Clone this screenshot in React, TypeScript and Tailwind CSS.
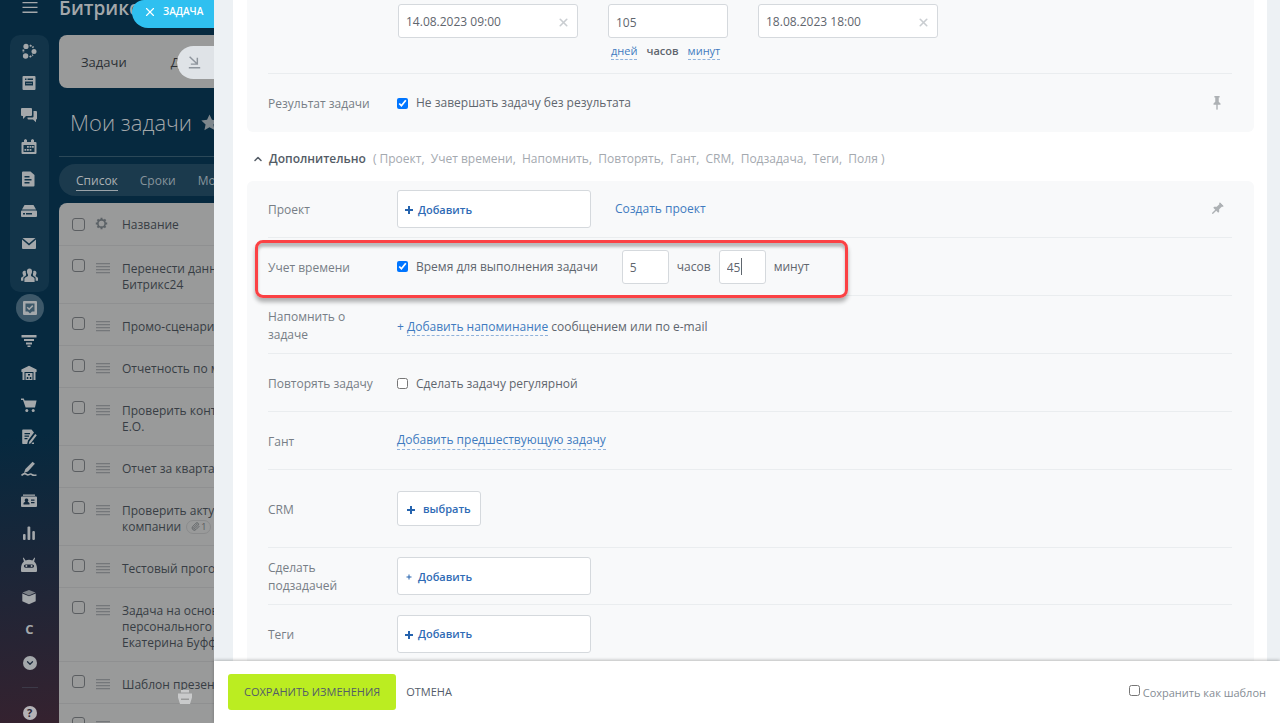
import type { ReactNode } from 'react';
import { ChevronDown, ChevronUp, Paperclip, X } from 'lucide-react';

type IconProps = { children: ReactNode; className?: string };

const Glyph = ({ children, className = 'size-4' }: IconProps) => (
    <svg viewBox="0 0 16 16" fill="currentColor" className={className} aria-hidden="true">
        {children}
    </svg>
);

const groupIcons: { label: string; icon: ReactNode }[] = [
    {
        label: 'CoPilot',
        icon: (
            <Glyph>
                <circle cx="5" cy="3.4" r="2.6" />
                <circle cx="13" cy="8.6" r="2.5" />
                <circle cx="4.6" cy="13" r="2.7" />
                <path d="M8.8 2.2 12.6 4.6M2.4 6.6v3.2M8.6 14 12 12" fill="none" stroke="currentColor" strokeWidth="1.8" strokeDasharray="2 1" />
            </Glyph>
        ),
    },
    {
        label: 'Лента',
        icon: (
            <Glyph>
                <path fillRule="evenodd" d="M2.500 1h11a1 1 0 0 1 1 1v12a1 1 0 0 1-1 1h-11a1 1 0 0 1-1-1V2a1 1 0 0 1 1-1ZM4 3.500V5h1.500V3.500H4Zm2.500 0V5H12V3.500H6.500ZM4 6.500V10.500h8V6.500H4Z" />
                <path d="M5 8h6v1H5z" opacity=".5" />
            </Glyph>
        ),
    },
    {
        label: 'Чаты',
        icon: (
            <Glyph>
                <path d="M1 1h9a1 1 0 0 1 1 1v6a1 1 0 0 1-1 1H5l-3 3V9H1a1 1 0 0 1-1-1V2a1 1 0 0 1 1-1Z" />
                <path d="M12.500 4H15a1 1 0 0 1 1 1v6.500a1 1 0 0 1-1 1v2.800l-3-2.800H7.500a1 1 0 0 1-1-1v-1h5a1 1 0 0 0 1-1V4Z" />
            </Glyph>
        ),
    },
    {
        label: 'Календарь',
        icon: (
            <Glyph>
                <path fillRule="evenodd" d="M1.500 3H3V1l1.500-1L6 1v2h4V1l1.500-1L13 1v2h1.500a1 1 0 0 1 1 1v10a1 1 0 0 1-1 1h-13a1 1 0 0 1-1-1V4a1 1 0 0 1 1-1Zm1 3v7h11V6h-11Z" />
                <path d="M6 7h1.800v1.800H6zM8.600 7h1.800v1.800H8.600zM11 7h1.800v1.800H11zM3.500 10h1.800v1.800H3.500zM6 10h1.800v1.800H6zM8.600 10h1.800v1.800H8.600z" />
            </Glyph>
        ),
    },
    {
        label: 'Документы',
        icon: (
            <Glyph>
                <path fillRule="evenodd" d="M2 .5h7.500L13.500 4v10.500a1 1 0 0 1-1 1H2a1 1 0 0 1-1-1v-13a1 1 0 0 1 1-1ZM3.500 5v1.400h5V5h-5Zm0 3v1.400h7V8h-7Zm0 3v1.400h5V11h-5Z" />
            </Glyph>
        ),
    },
    {
        label: 'Диск',
        icon: (
            <Glyph>
                <path d="M3.500 2h9L15 6.500H1L3.500 2Z" />
                <path fillRule="evenodd" d="M1 7.500h14a1 1 0 0 1 1 1V13a1 1 0 0 1-1 1H1a1 1 0 0 1-1-1V8.500a1 1 0 0 1 1-1ZM2 10v1.500h2V10H2Zm3 0v1.500h6V10H5Z" />
            </Glyph>
        ),
    },
    {
        label: 'Почта',
        icon: (
            <Glyph>
                <path d="M1.500 3h13L8 8.500 1.500 3Z" />
                <path d="M1 4.500 8 10.400l7-5.900V13a1 1 0 0 1-1 1H2a1 1 0 0 1-1-1V4.500Z" />
            </Glyph>
        ),
    },
    {
        label: 'Группы',
        icon: (
            <Glyph className="size-[17px]">
                <path d="M8 1.500c1.600 0 2.400 1.200 2.400 2.800 0 1.300-.5 2.300-1 2.900v1.200l2.600 1.400c.6.3.8.9.8 1.500V14H3.200v-2.700c0-.6.2-1.200.8-1.500l2.600-1.400V7.200c-.5-.6-1-1.600-1-2.900C5.600 2.700 6.400 1.500 8 1.500Z" />
                <path d="M3.200 3.500c-1.200 0-1.800.9-1.800 2.200 0 1 .4 1.700.8 2.200v.9L.6 9.600c-.4.200-.6.600-.6 1.100V13h2.200v-2c0-.9.4-1.600 1.200-2l1.300-.7-.3-.4c.3-.4.4-.9.4-1.500-.4-.8-.5-1.700-.3-2.500-.3-.3-.7-.4-1.300-.4Zm9.600 0c1.200 0 1.800.9 1.800 2.200 0 1-.4 1.700-.8 2.200v.9l1.600.8c.4.200.6.600.6 1.100V13h-2.200v-2c0-.9-.4-1.600-1.200-2l-1.300-.7.3-.4c-.3-.4-.4-.9-.4-1.500.4-.8.5-1.700.3-2.500.3-.3.7-.4 1.300-.4Z" />
            </Glyph>
        ),
    },
];

const tasksIcon = (
    <Glyph>
        <path fillRule="evenodd" d="M2 1h12a1 1 0 0 1 1 1v12a1 1 0 0 1-1 1H2a1 1 0 0 1-1-1V2a1 1 0 0 1 1-1Zm1.500 2.500v8H6l2 2 2-2h2.500v-8h-9Z" />
        <path d="m5.200 7.200 2 2 3.600-3.600" fill="none" stroke="currentColor" strokeWidth="1.500" />
    </Glyph>
);

const menuIcons: { label: string; icon: ReactNode }[] = [
    {
        label: 'CRM',
        icon: (
            <Glyph>
                <path d="M.5 2h15v2.500H.5zM3 6h10v2H3zM5 9.500h6v2H5zM6.500 12.500h3v1.500h-3z" />
            </Glyph>
        ),
    },
    {
        label: 'Склад',
        icon: (
            <Glyph>
                <path fillRule="evenodd" d="M8 .8 15.600 4.400V7H14.500v8h-2V7h-9v8h-2V7H.4V4.400L8 .8Z" />
                <path fillRule="evenodd" d="M4.500 8h7v7h-7V8ZM7 9v1.600h2V9H7Zm-1.200 3v2h1.500v-2H5.800Zm3 0v2h1.500v-2H8.800Z" />
            </Glyph>
        ),
    },
    {
        label: 'Магазин',
        icon: (
            <Glyph>
                <path d="M0 1.500h2.800l.8 2h12L14 10.500H4.600L2 3H0V1.500Z" />
                <circle cx="5.800" cy="13.500" r="1.500" />
                <circle cx="12.200" cy="13.500" r="1.500" />
            </Glyph>
        ),
    },
    {
        label: 'Договоры',
        icon: (
            <Glyph>
                <path fillRule="evenodd" d="M2 .5h8.500l2.500 3-6 8-.8 3.500H2a.8.800 0 0 1-.8-.8V1.300A.8.800 0 0 1 2 .5ZM3.500 4v1.200H9V4H3.500Zm0 2.500v1.200H8V6.500H3.500Zm0 2.500v1.200h3V9h-3Z" />
                <path d="m14.200 5 1.600 1.200-6 8-2 .8.4-2.200 6-7.800ZM11.500 13.500H13V15h-2.500z" />
            </Glyph>
        ),
    },
    {
        label: 'Подпись',
        icon: (
            <Glyph>
                <path d="m11.600.8 2.300 2-7 7.600-4 1.600 1.500-3.900L11.600.8Z" />
                <path d="M.5 14.500c2-2 3.500-2.200 4.500-1.500s1.500 1.500 3 .6 2-.9 3 0 2 .9 4.500.4" fill="none" stroke="currentColor" strokeWidth="1.600" />
            </Glyph>
        ),
    },
    {
        label: 'Контакты',
        icon: (
            <Glyph>
                <path d="M2 1.500h12v1.300H2z" />
                <path fillRule="evenodd" d="M1 3.500h14a1 1 0 0 1 1 1V13a1 1 0 0 1-1 1H1a1 1 0 0 1-1-1V4.500a1 1 0 0 1 1-1Zm4.500 2A1.700 1.700 0 0 0 4.400 8.600L2.500 10v1.500h6V10L6.600 8.600A1.700 1.700 0 0 0 5.500 5.500ZM10 6.500v1.300h3.500V6.500H10Zm0 2.500v1.300h3.500V9H10Z" />
            </Glyph>
        ),
    },
    {
        label: 'Аналитика',
        icon: (
            <Glyph>
                <rect x="2" y="9" width="2.600" height="6" rx="1" />
                <rect x="6.500" y="1.500" width="2.800" height="13.500" rx="1" />
                <rect x="11.300" y="6" width="2.600" height="9" rx="1" />
            </Glyph>
        ),
    },
    {
        label: 'Роботы',
        icon: (
            <Glyph>
                <path fillRule="evenodd" d="M2.500.5 4.600 3.600a8 8 0 0 1 6.800 0L13.500.5l.6.400-1 3.500c1.700 1.200 2.900 3.800 2.900 7.100V14a1 1 0 0 1-1 1H1a1 1 0 0 1-1-1v-2.500c0-3.300 1.200-5.900 2.900-7.100l-1-3.500.6-.4ZM4.500 7.500a1.600 1.600 0 0 0 0 3.200h7a1.600 1.600 0 0 0 0-3.200h-7Z" />
                <circle cx="5.400" cy="9.100" r="1" />
                <circle cx="10.600" cy="9.100" r="1" />
            </Glyph>
        ),
    },
    {
        label: 'Маркет',
        icon: (
            <Glyph>
                <path d="M8 1 14.500 3.600 8 6.400 1.500 3.600 8 1Z" opacity=".7" />
                <path d="M1.300 4.500 8 7.300l6.700-2.800v7.800L8 15.200l-6.700-2.900V4.500Z" />
            </Glyph>
        ),
    },
];

const tasks: { title: string[]; files?: number }[] = [
    { title: ['Перенести данные', 'Битрикс24'] },
    { title: ['Промо-сценарий'] },
    { title: ['Отчетность по маркетингу'] },
    { title: ['Проверить контракт', 'Е.О.'] },
    { title: ['Отчет за квартал'] },
    { title: ['Проверить актуальность', 'компании'], files: 1 },
    { title: ['Тестовый прогон'] },
    { title: ['Задача на основании', 'персонального чата', 'Екатерина Буффон'] },
    { title: ['Шаблон презентации'] },
    { title: [] },
];

const SideNav = () => (
    <nav className="flex w-[59px] shrink-0 flex-col items-center bg-[linear-gradient(175deg,#06293f_60%,#35222f)] text-[#a4a8ab]">
        <button type="button" aria-label="Меню" className="flex h-[35px] shrink-0 items-start">
            <Glyph>
                <path d="M.5 2h15v1.300H.5zM.5 6.800h15v1.300H.5zM.5 11.600h15v1.300H.5z" />
            </Glyph>
        </button>
        <div className="flex w-[39px] shrink-0 flex-col items-center rounded-[10px] bg-[#123449] pb-px">
            {groupIcons.map(({ label, icon }) => (
                <a key={label} href="#" aria-label={label} className="flex h-8 w-full items-center justify-center pr-px">
                    {icon}
                </a>
            ))}
        </div>
        <a href="#" aria-label="Задачи" className="mb-px flex size-8 shrink-0 items-center justify-center">
            <span className="flex size-7 items-center justify-center rounded-full bg-[#3d5869]">{tasksIcon}</span>
        </a>
        {menuIcons.map(({ label, icon }) => (
            <a key={label} href="#" aria-label={label} className="flex h-8 w-full shrink-0 items-center justify-center pr-px">
                {icon}
            </a>
        ))}
        <a href="#" className="flex h-[34px] shrink-0 items-center text-[13px] font-bold">С</a>
        <button type="button" aria-label="Ещё" className="flex h-8 shrink-0 items-center">
            <span className="flex size-[14px] items-center justify-center rounded-full bg-[#a4a8ab] text-[#1d2c3e]">
                <ChevronDown className="size-[10px]" strokeWidth={3} />
            </span>
        </button>
        <div className="mt-2 h-px w-4 shrink-0 bg-[#3c3a48]" />
        <a href="#" aria-label="Помощь" className="mt-[18px] flex size-[14px] shrink-0 items-center justify-center rounded-full bg-[#b4b2b6] text-[11px] font-bold text-[#2c2635]">
            ?
        </a>
    </nav>
);

const TaskList = () => (
    <table className="w-full table-fixed border-collapse text-left text-[12px] leading-4 text-[#373d44]">
        <colgroup>
            <col className="w-8" />
            <col className="w-[31px]" />
            <col />
        </colgroup>
        <thead>
            <tr className="h-[42px] border-b border-[#8f9091]">
                <th className="pt-0.5 pl-[13px]">
                    <input type="checkbox" aria-label="Выбрать все" className="block size-[13px] appearance-none rounded-[3px] border border-[#5b5e61]" />
                </th>
                <th className="pl-1">
                    <Glyph className="size-[13px] text-[#5b6166]">
                        <circle cx="8" cy="8" r="4.500" fill="none" stroke="currentColor" strokeWidth="2" />
                        <path d="M8 1v2.500M8 12.500V15M1 8h2.500M12.500 8H15M3 3l2 2M11 11l2 2M13 3l-2 2M5 11l-2 2" stroke="currentColor" strokeWidth="2.400" />
                    </Glyph>
                </th>
                <th className="pt-0.5 font-normal">Название</th>
            </tr>
        </thead>
        <tbody>
            {tasks.map((task, index) => (
                <tr key={index} className="border-b border-[#8f9091] align-top">
                    <td className="pt-[13px] pl-[13px]">
                        <input type="checkbox" aria-label={`Задача ${index + 1}`} className="block size-[13px] appearance-none rounded-[3px] border border-[#5b5e61]" />
                    </td>
                    <td className="pt-[17px] pl-[5px]">
                        <div className="h-[11px] w-[14px] bg-[repeating-linear-gradient(#74777a_0_1px,#8f9091_1px_2px,transparent_2px_3px)]" />
                    </td>
                    <td className="pt-[15px] pb-[10px]">
                        {task.title.map((line, i) => (
                            <div key={line} className="flex h-4 items-center whitespace-nowrap">
                                {line}
                                {task.files && i === task.title.length - 1 && (
                                    <span className="ml-[5px] flex h-[14px] items-center gap-px rounded-full border border-[#8a8b8c] px-1 text-[9px] text-[#54585c]">
                                        <Paperclip className="size-[9px]" />
                                        {task.files}
                                    </span>
                                )}
                            </div>
                        ))}
                    </td>
                </tr>
            ))}
        </tbody>
    </table>
);

const Backdrop = () => (
    <div className="relative flex w-[214px] shrink-0 overflow-hidden bg-[#06293f]">
        <SideNav />
        <div className="flex min-w-0 flex-1 flex-col whitespace-nowrap">
            <div className="h-[35px] shrink-0 text-[19px] leading-4 font-semibold text-[#a3a7aa]">Битрикс24</div>
            <div className="flex h-[53px] shrink-0 items-center gap-[44px] rounded-l-lg bg-[#999a9a] pt-0.5 pl-[22px] text-[13px] font-medium text-[#2c3136]">
                <a href="#">Задачи</a>
                <a href="#">Дела</a>
            </div>
            <div className="flex h-[69px] shrink-0 items-center gap-[9px] border-b border-[#2b4858] pl-[11px] text-[22px] font-light text-[#a3a7aa]">
                <h1>Мои задачи</h1>
                <Glyph className="size-[17px] shrink-0 text-[#7d868c]">
                    <path d="m8 .5 2.300 5 5.400.6-4 3.700 1.100 5.400L8 12.500l-4.800 2.700 1.100-5.400-4-3.700 5.400-.6L8 .5Z" />
                </Glyph>
            </div>
            <div className="my-[7px] flex h-8 shrink-0 items-center gap-[22px] rounded-l-full bg-[#1b3a4d] pt-0.5 pl-[17px] text-[12px] text-[#87949c]">
                <a href="#" className="border-b border-[#9aa3a9] leading-[18px] text-[#abb0b4]">Список</a>
                <a href="#">Сроки</a>
                <a href="#">Мой план</a>
            </div>
            <div className="flex-1 overflow-hidden rounded-tl-lg bg-[#999a9a]">
                <TaskList />
            </div>
        </div>

        {/* Slider labels hanging over the dimmed page */}
        <button type="button" className="absolute top-0 right-0 flex h-7 w-[82px] items-center gap-[6px] rounded-bl-[16px] rounded-tl-[12px] bg-[#2fc0f0] pb-[5px] pl-[11px] text-[10px] font-semibold text-white">
            <X className="size-[14px]" strokeWidth={2} />
            ЗАДАЧА
        </button>
        <button type="button" aria-label="Свернуть" className="absolute top-[46px] right-0 flex h-[33px] w-[37px] items-center rounded-l-full bg-[#dfe3e7] pl-[11px] text-[#8e959d]">
            <Glyph className="size-[13px]">
                <path d="M2 1l9 8.500M11.500 2v8H3.500M1 14.500h14" fill="none" stroke="currentColor" strokeWidth="1.800" />
            </Glyph>
        </button>
        <button type="button" aria-label="Печать" className="absolute right-[21px] bottom-[18px] text-[#c9cacb]">
            <Glyph>
                <path fillRule="evenodd" d="M4 1h8v2.500H4V1ZM1 4.500h14v4l-2 6.500H3L1 8.500v-4ZM4 9.500V11h8V9.500H4Z" />
            </Glyph>
        </button>
    </div>
);

const fieldClass = 'rounded-[3px] border border-[#d5d9dd] bg-white text-[#5f666e]';
const dashedLink = 'border-b border-dashed border-[#8fb2dc] text-[#3f7bc0]';
const checkClass = 'size-[11px] accent-[#0075ff]';

const DateField = ({ label, value }: { label: string; value: string }) => (
    <div className={`flex h-[34px] w-[180px] items-center justify-between px-[7px] pt-0.5 ${fieldClass}`}>
        <input aria-label={label} defaultValue={value} className="w-[130px] text-[12px] outline-none" />
        <button type="button" aria-label="Очистить" className="text-[#c9cdd1]"><X className="size-[13px]" strokeWidth={3} /></button>
    </div>
);

const Plus = ({ thin = false }: { thin?: boolean }) => (
    <Glyph className="size-2 text-[#2563ae]">
        {thin ? <path d="M7 3h2v4h4v2H9v4H7V9H3V7h4z" /> : <path d="M6 0h4v6h6v4h-6v6H6v-6H0V6h6z" />}
    </Glyph>
);

const AddBox = ({ thin = false }: { thin?: boolean }) => (
    <button type="button" className={`flex h-[38px] w-[194px] items-center gap-[5px] pt-0.5 pl-[7px] text-[11px] font-semibold ${fieldClass}`}>
        <Plus thin={thin} />
        <span className="text-[#2f6bb5]">Добавить</span>
    </button>
);

const Pin = ({ tilted = false }: { tilted?: boolean }) => (
    <button type="button" aria-label="Закрепить" className="text-[#adb1b4]">
        <Glyph className={tilted ? 'size-[14px] rotate-45' : 'size-[14px]'}>
            <path d="M5 0h6v1.800h-1v4.700l2 2V10H8.800v5l-.8 1-.8-1v-5H4V8.500l2-2V1.800H5z" />
        </Glyph>
    </button>
);

type RowProps = { label: string; className: string; children: ReactNode; pinned?: ReactNode; last?: boolean };

const Row = ({ label, className, children, pinned, last }: RowProps) => (
    <div className={`relative flex items-center ${last ? '' : 'border-b border-[#eaedef]'} ${className}`}>
        <div className="w-[129px] shrink-0 pt-0.5 pr-3 text-[12px] leading-[18px] text-[#777e86]">{label}</div>
        <div className="flex flex-1 items-center">{children}</div>
        {pinned && <div className="flex w-[22px] shrink-0">{pinned}</div>}
    </div>
);

const TaskForm = () => (
    <form className="mx-[19px] mr-[13px] bg-white pr-[13px] pl-[14px] text-[12px] text-[#5f666e]">
        <section className="rounded-b-[6px] bg-[#f8f9fa] pr-[22px] pl-[21px]">
            <div className="flex h-[74px] items-start border-b border-[#eaedef] pt-1 pl-[130px]">
                <DateField label="Начать задачу с" value="14.08.2023 09:00" />
                <div className="mr-[30px] ml-[30px] w-[120px]">
                    <input aria-label="Длительность" defaultValue="105" className={`block h-[34px] w-full px-[7px] pt-0.5 text-[12px] ${fieldClass}`} />
                    <div className="flex gap-[9px] pt-[5px] pl-[3px] text-[11px] leading-4">
                        <a href="#" className={dashedLink}>дней</a>
                        <b className="font-semibold">часов</b>
                        <a href="#" className={dashedLink}>минут</a>
                    </div>
                </div>
                <DateField label="Завершить" value="18.08.2023 18:00" />
            </div>
            <Row label="Результат задачи" className="h-[58px]" last pinned={<Pin />}>
                <label className="flex items-center gap-[8px]">
                    <input type="checkbox" defaultChecked className={checkClass} />
                    Не завершать задачу без результата
                </label>
            </Row>
        </section>

        <div className="flex h-[49px] items-center gap-[7px] pt-1 pl-[5px] whitespace-pre text-[#a4a9af]">
            <button type="button" className="flex items-center gap-[5px] font-semibold text-[#545c66]">
                <ChevronUp className="size-3" strokeWidth={3} />
                Дополнительно
            </button>
            <span>( Проект,  Учет времени,  Напомнить,  Повторять,  Гант,  CRM,  Подзадача,  Теги,  Поля )</span>
        </div>

        <section className="rounded-[6px] bg-[#f8f9fa] pr-[22px] pb-8 pl-[21px]">
            <Row label="Проект" className="h-[57px]" pinned={<Pin tilted />}>
                <AddBox />
                <a href="#" className="ml-6 text-[#3f7bc0]">Создать проект</a>
            </Row>
            <Row label="Учет времени" className="h-[58px]">
                <label className="flex items-center gap-[8px]">
                    <input type="checkbox" defaultChecked className={checkClass} />
                    Время для выполнения задачи
                </label>
                <div className="ml-6 flex items-center gap-2">
                    <input aria-label="Часы" defaultValue="5" className={`h-[34px] w-[47px] px-[7px] pt-0.5 ${fieldClass}`} />
                    <span>часов</span>
                    <span className="relative">
                        <input aria-label="Минуты" defaultValue="45" className={`h-[34px] w-[47px] px-[7px] pt-0.5 ${fieldClass}`} />
                        <span className="absolute top-2 left-[22px] h-[17px] w-px bg-[#5f666e]" />
                    </span>
                    <span>минут</span>
                </div>
                {/* Step highlight */}
                <div className="pointer-events-none absolute top-[2px] -left-[13px] h-[58px] w-[593px] rounded-[8px] border-3 border-[#fb4144] shadow-[0_4px_4px_rgba(0,0,0,0.3),inset_0_4px_3px_rgba(0,0,0,0.25)]" />
            </Row>
            <Row label="Напомнить о задаче" className="h-[58px] [&>div:first-child]:pr-8">
                <span className="pt-1"><span className="text-[#3f7bc0]">+</span> <a href="#" className={dashedLink}>Добавить напоминание</a> сообщением или по e-mail</span>
            </Row>
            <Row label="Повторять задачу" className="h-[58px]">
                <label className="flex items-center gap-[8px] pt-0.5">
                    <input type="checkbox" className={checkClass} />
                    Сделать задачу регулярной
                </label>
            </Row>
            <Row label="Гант" className="h-[58px]">
                <a href="#" className={dashedLink}>Добавить предшествующую задачу</a>
            </Row>
            <Row label="CRM" className="h-[78px]">
                <button type="button" className={`flex h-[35px] items-center gap-2 px-[9px] pt-0.5 text-[11px] font-semibold ${fieldClass}`}>
                    <Plus />
                    <span className="text-[#2f6bb5]">выбрать</span>
                </button>
            </Row>
            <Row label="Сделать подзадачей" className="h-[57px] [&>div:first-child]:pr-8">
                <AddBox thin />
            </Row>
            <Row label="Теги" className="h-[58px]">
                <AddBox />
            </Row>
        </section>
    </form>
);

const Footer = () => (
    <footer className="relative flex h-[62px] shrink-0 items-center bg-white px-[14px] text-[12px] shadow-[0_-1px_3px_rgba(0,0,0,0.25)]">
        <button type="button" className="h-9 rounded-[3px] bg-[#bbed21] px-4 text-[11px] font-medium text-[#535c69]">СОХРАНИТЬ ИЗМЕНЕНИЯ</button>
        <button type="button" className="ml-[10px] text-[11px] font-medium text-[#535c69]">ОТМЕНА</button>
        <label className="ml-auto flex items-center gap-[3px] text-[11px] text-[#868d95]">
            <input type="checkbox" className="mb-1 size-[11px]" />
            <span className="pt-0.5">Сохранить как шаблон</span>
        </label>
    </footer>
);

const App = () => (
    <div className="flex h-screen overflow-hidden font-['Open_Sans','Noto_Sans',sans-serif]">
        <Backdrop />
        <main className="flex min-w-0 flex-1 flex-col bg-[#edf1f4]">
            <div className="min-h-0 flex-1 overflow-hidden">
                <TaskForm />
            </div>
            <Footer />
        </main>
    </div>
);

export default App;
